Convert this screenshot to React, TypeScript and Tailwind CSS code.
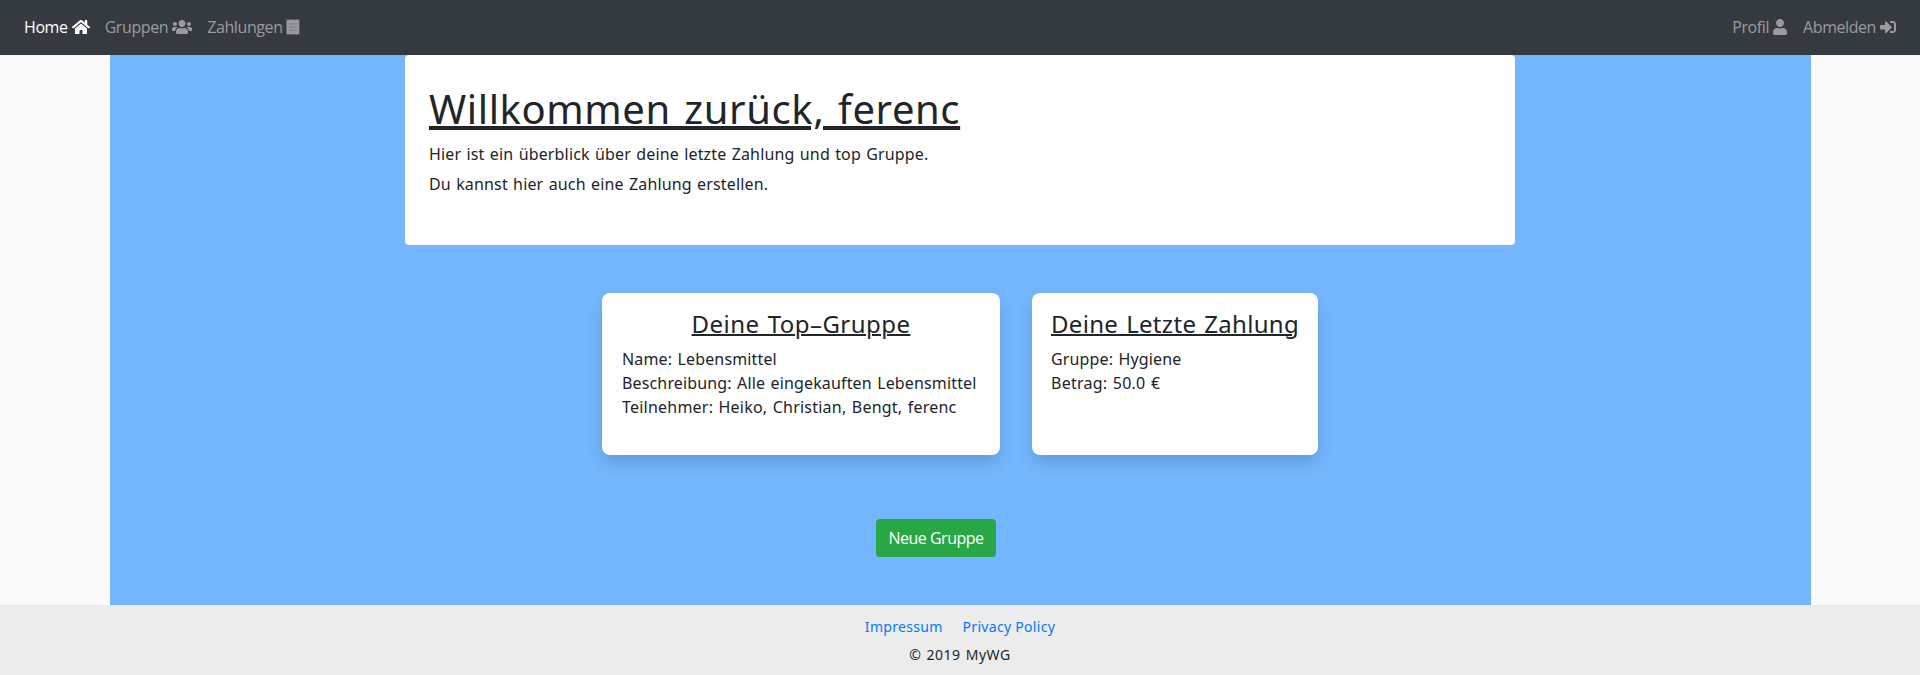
import { FaHome, FaUsers, FaUser, FaSignInAlt } from "react-icons/fa";

function ReceiptIcon() {
  return (
    <svg viewBox="0 0 14 16" className="h-4 w-[14px]" fill="currentColor">
      <path d="M.5 0 2 1.2 3.5 0 4.8 1.2 6 0 7 1.2 8 0 9.2 1.2 10.5 0 12 1.2 13.3 0V16L12 14.8 10.5 16 9.2 14.8 8 16 7 14.8 6 16 4.8 14.8 3.5 16 2 14.8.5 16Z" />
      <path d="M3 4.9h8M3 8h8M3 11.1h8" stroke="#7b7f83" strokeWidth="1" fill="none" />
    </svg>
  );
}

export default function App() {
  return (
    <div className="flex h-[675px] flex-col bg-[#fafafa] font-['Noto_Sans',sans-serif] text-base text-[#212529]">
      <nav className="flex h-[55px] shrink-0 items-center justify-between bg-[#343a40] px-6 pb-px font-['Open_Sans',sans-serif] text-[#999c9f]">
        <div className="flex items-center gap-[15px]">
          <a className="flex items-center gap-1 text-white">
            <span className="tracking-[-0.4px]">Home</span>
            <FaHome className="h-4 w-[18px]" />
          </a>
          <a className="flex items-center gap-1">
            <span className="tracking-[-0.4px]">Gruppen</span>
            <FaUsers className="h-4 w-5" />
          </a>
          <a className="flex items-center gap-[3px]">
            <span className="tracking-[-0.4px]">Zahlungen</span>
            <ReceiptIcon />
          </a>
        </div>
        <div className="flex items-center gap-4">
          <a className="flex items-center gap-1">
            <span className="tracking-[-0.4px]">Profil</span>
            <FaUser className="h-4 w-[14px]" />
          </a>
          <a className="flex items-center gap-1">
            <span className="tracking-[-0.43px]">Abmelden</span>
            <FaSignInAlt className="h-4 w-4" />
          </a>
        </div>
      </nav>

      <main className="mx-auto flex h-[550px] w-[1701px] shrink-0 flex-col items-center bg-[#74b7ff]">
        <section className="h-[190px] w-[1110px] rounded bg-white px-6 pt-[30px]">
          <h1 className="text-[40px] leading-[48px] tracking-[0.6px] underline decoration-4 underline-offset-2 [word-spacing:2.5px]">
            Willkommen zurück, ferenc
          </h1>
          <div className="mt-[9px] space-y-1.5 leading-6 tracking-[0.15px] [word-spacing:1px]">
            <p>Hier ist ein überblick über deine letzte Zahlung und top Gruppe.</p>
            <p>Du kannst hier auch eine Zahlung erstellen.</p>
          </div>
        </section>

        <div className="mt-12 flex gap-8">
          <article className="h-[162px] w-[398px] rounded-lg bg-white px-[19px] pt-4 shadow-[0_8px_16px_rgba(0,0,0,0.15)]">
            <h2 className="text-center text-2xl leading-[30px] tracking-[0.45px] underline decoration-2 [word-spacing:1.5px]">
              Deine Top–Gruppe
            </h2>
            <div className="mt-2 pl-px leading-6 tracking-[0.15px] whitespace-nowrap [word-spacing:1px]">
              <p>Name: Lebensmittel</p>
              <p>Beschreibung: Alle eingekauften Lebensmittel</p>
              <p className="tracking-[0.22px]">Teilnehmer: Heiko, Christian, Bengt, ferenc</p>
            </div>
          </article>
          <article className="h-[162px] w-[286px] rounded-lg bg-white px-[19px] pt-4 whitespace-nowrap shadow-[0_8px_16px_rgba(0,0,0,0.15)]">
            <h2 className="text-2xl leading-[30px] tracking-[0.3px] underline decoration-2 [word-spacing:1.5px]">
              Deine Letzte Zahlung
            </h2>
            <div className="mt-2 leading-6 tracking-[0.15px] [word-spacing:1px]">
              <p>Gruppe: Hygiene</p>
              <p className="tracking-[0.25px]">Betrag: 50.0 €</p>
            </div>
          </article>
        </div>

        <button className="mt-16 mr-12 h-[38px] w-[120px] rounded bg-[#28a745] font-['Open_Sans',sans-serif] tracking-[-0.5px] whitespace-nowrap text-white">
          Neue Gruppe
        </button>
      </main>

      <footer className="flex h-[70px] shrink-0 flex-col items-center bg-[#ececec] pt-3 text-sm">
        <div className="flex gap-5 leading-5 tracking-[0.3px] text-[#007bff]">
          <a>Impressum</a>
          <a>Privacy Policy</a>
        </div>
        <p className="mt-2 leading-5 tracking-[0.5px] [word-spacing:1px]">© 2019 MyWG</p>
      </footer>
    </div>
  );
}
